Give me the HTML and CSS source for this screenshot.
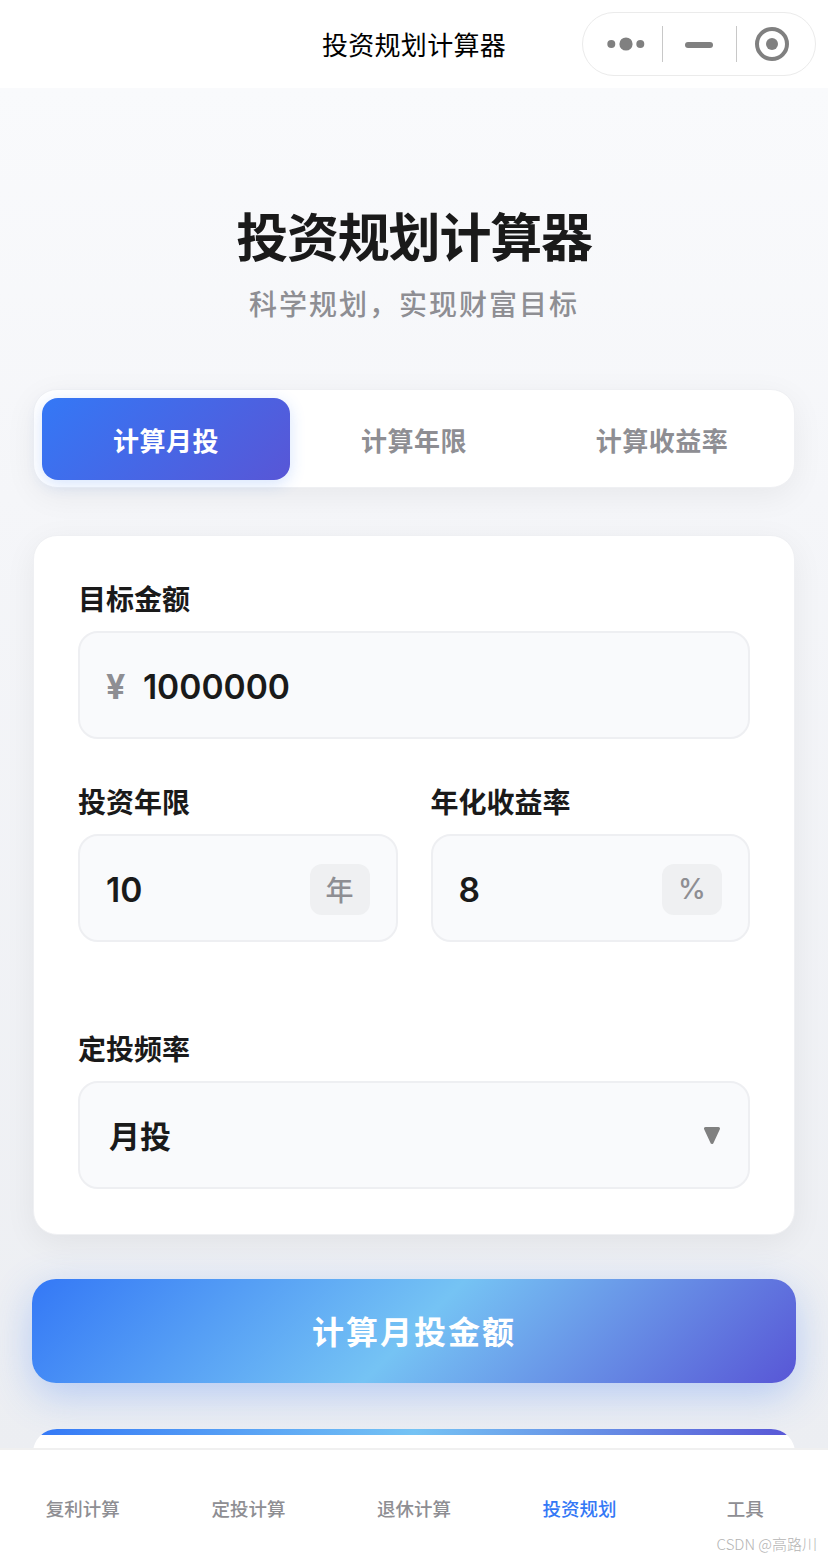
FILE: index.html
```html
<!DOCTYPE html>
<html lang="zh">
<head>
<meta charset="utf-8">
<title>投资规划计算器</title>
<link rel="stylesheet" href="styles.css">
</head>
<body>
<header class="nav">
  <div class="nav-title">投资规划计算器</div>
  <div class="capsule">
    <svg class="cap-icon" width="38" height="14" viewBox="0 0 38 14"><circle cx="4.3" cy="7" r="4" fill="#808080"/><circle cx="19" cy="7" r="6.6" fill="#808080"/><circle cx="33.3" cy="7" r="4" fill="#808080"/></svg>
    <span class="cap-sep"></span>
    <svg class="cap-icon" width="28" height="6" viewBox="0 0 28 6"><rect width="28" height="6" rx="3" fill="#808080"/></svg>
    <span class="cap-sep"></span>
    <svg class="cap-icon" width="36" height="36" viewBox="0 0 36 36"><circle cx="18" cy="18" r="15" fill="none" stroke="#808080" stroke-width="4"/><circle cx="18" cy="18" r="6" fill="#808080"/></svg>
  </div>
</header>
<main class="page">
  <section class="hero">
    <h1 class="hero-title">投资规划计算器</h1>
    <p class="hero-sub">科学规划，实现财富目标</p>
  </section>
  <nav class="tabs">
    <div class="tab tab-active">计算月投</div>
    <div class="tab">计算年限</div>
    <div class="tab">计算收益率</div>
  </nav>
  <section class="card">
    <div class="field">
      <div class="label">目标金额</div>
      <div class="input"><span class="prefix">¥</span><span class="value">1000000</span></div>
    </div>
    <div class="field-row">
      <div class="field">
        <div class="label">投资年限</div>
        <div class="input"><span class="value">10</span><span class="unit">年</span></div>
      </div>
      <div class="field">
        <div class="label">年化收益率</div>
        <div class="input"><span class="value">8</span><span class="unit">%</span></div>
      </div>
    </div>
    <div class="field">
      <div class="label">定投频率</div>
      <div class="input input-select"><span class="select-value">月投</span><svg class="arrow" width="16" height="17" viewBox="0 0 16 17"><polygon points="1.500,1.500 14.500,1.500 8,15.500" fill="#808080" stroke="#808080" stroke-width="3" stroke-linejoin="round"/></svg></div>
    </div>
  </section>
  <div class="cta">计算月投金额</div>
  <section class="result-card"></section>
</main>
<footer class="tabbar">
  <div class="tabbar-item">复利计算</div>
  <div class="tabbar-item">定投计算</div>
  <div class="tabbar-item">退休计算</div>
  <div class="tabbar-item tabbar-active">投资规划</div>
  <div class="tabbar-item">工具</div>
  <div class="watermark">CSDN @高路川</div>
</footer>
</body>
</html>
```
FILE: styles.css
```css
* { box-sizing: border-box; }
html, body { margin: 0; height: 100%; }
body {
  width: 828px;
  height: 1560px;
  display: flex;
  flex-direction: column;
  overflow: hidden;
  font-family: Inter, "Noto Sans CJK SC", sans-serif;
  color: #1a1a1a;
  background: #fff;
}
.nav {
  height: 88px;
  flex: none;
  position: relative;
  display: flex;
  align-items: center;
  justify-content: center;
  background: #fff;
}
.nav-title { font-size: 26px; font-weight: 400; letter-spacing: 0.3px; color: #000; margin-top: -2px; }
.capsule {
  position: absolute;
  left: 582px;
  top: 12px;
  width: 234px;
  height: 64px;
  border: 1px solid #ebebeb;
  border-radius: 32px;
  background: #fff;
  display: flex;
  align-items: center;
  padding-left: 24px;
}
.cap-sep { width: 1px; height: 36px; background: #c8c8c8; }
.cap-icon:nth-child(1) { margin-right: 17px; }
.cap-icon:nth-child(3) { margin: 1px 23px 0 22px; }
.cap-icon:nth-child(5) { margin-left: 17px; }
.page {
  flex: 1;
  min-height: 0;
  overflow: hidden;
  padding: 0 33px;
  background: linear-gradient(180deg, #f9fafc 0%, #f5f6f9 30%, #eceef2 100%);
}
.hero { padding-top: 115px; text-align: center; }
.hero-title { margin: 0; font-size: 52px; line-height: 72px; font-weight: 700; letter-spacing: -1.2px; color: #1a1a1a; }
.hero-sub { margin: 13px 0 0; font-size: 28px; line-height: 34px; letter-spacing: 2px; color: #8e8e93; font-weight: 500; }
.tabs {
  margin-top: 67px;
  height: 99px;
  padding: 8px;
  display: grid;
  grid-template-columns: repeat(3, 1fr);
  background: #fff;
  border: 1px solid #eff0f3;
  border-radius: 24px;
  box-shadow: 0 8px 32px rgba(0, 0, 0, 0.06);
}
.tab {
  height: 82px;
  display: flex;
  align-items: center;
  justify-content: center;
  border-radius: 16px;
  font-size: 26px;
  letter-spacing: 0.5px;
  font-weight: 700;
  color: #8e8e93;
}
.tab-active {
  color: #fff;
  background: linear-gradient(135deg, #3478f6, #5856d6);
  box-shadow: 0 4px 16px rgba(52, 120, 246, 0.2);
}
.card {
  margin-top: 47px;
  padding: 44px 44px 45px;
  background: #fff;
  border: 1px solid #eff0f3;
  border-radius: 24px;
  box-shadow: 0 8px 32px rgba(0, 0, 0, 0.06);
}
.label { font-size: 28px; line-height: 40px; font-weight: 600; color: #1a1a1a; margin-bottom: 11px; }
.input {
  height: 108px;
  border: 2px solid #eeeff2;
  border-radius: 20px;
  background: #f9fafc;
  display: flex;
  align-items: center;
  padding: 2px 26px 0;
}
.prefix { font-size: 34px; font-weight: 700; color: #8e8e93; margin-right: 17.5px; }
.value { font-size: 33.6px; font-weight: 600; color: #1a1a1a; }
.field-row {
  display: grid;
  grid-template-columns: 1fr 1fr;
  gap: 33px;
  margin: 44px 0 88px;
}
.unit {
  margin-left: auto;
  width: 60px;
  height: 51px;
  display: flex;
  align-items: center;
  justify-content: center;
  border-radius: 12px;
  background: #eff0f2;
  color: #8e8e93;
  font-size: 28px;
  font-weight: 500;
}
.select-value { font-size: 31px; font-weight: 600; margin: -3px 0 0 3px; color: #1a1a1a; }
.arrow { margin: -2px 2px 0 auto; }
.cta {
  margin: 44px -1px 0;
  height: 104px;
  padding-bottom: 2px;
  border-radius: 24px;
  display: flex;
  align-items: center;
  justify-content: center;
  font-size: 32px;
  font-weight: 700;
  letter-spacing: 2px;
  color: #fff;
  background: linear-gradient(135deg, #3478f6 0%, #75c3f4 50%, #5856d6 100%);
  box-shadow: 0 12px 40px rgba(52, 120, 246, 0.3);
}
.result-card {
  position: relative;
  margin-top: 46px;
  height: 60px;
  background: #fff;
  border-radius: 24px 24px 0 0;
  overflow: hidden;
}
.result-card::before {
  content: "";
  display: block;
  height: 6px;
  background: linear-gradient(90deg, #3478f6, #75c3f4 50%, #5856d6);
}
.tabbar {
  flex: none;
  height: 112px;
  padding-top: 5px;
  position: relative;
  display: grid;
  grid-template-columns: repeat(5, 1fr);
  align-items: center;
  background: #fff;
  border-top: 2px solid #f0f0f0;
}
.tabbar-item { text-align: center; font-size: 18.5px; font-weight: 500; color: #8e8e93; }
.tabbar-active { color: #3478f6; }
.watermark {
  position: absolute;
  right: 11px;
  bottom: 6px;
  font-size: 15px;
  font-weight: 300;
  color: #b4b4b4;
  font-family: "Noto Sans CJK SC", sans-serif;
}
```
